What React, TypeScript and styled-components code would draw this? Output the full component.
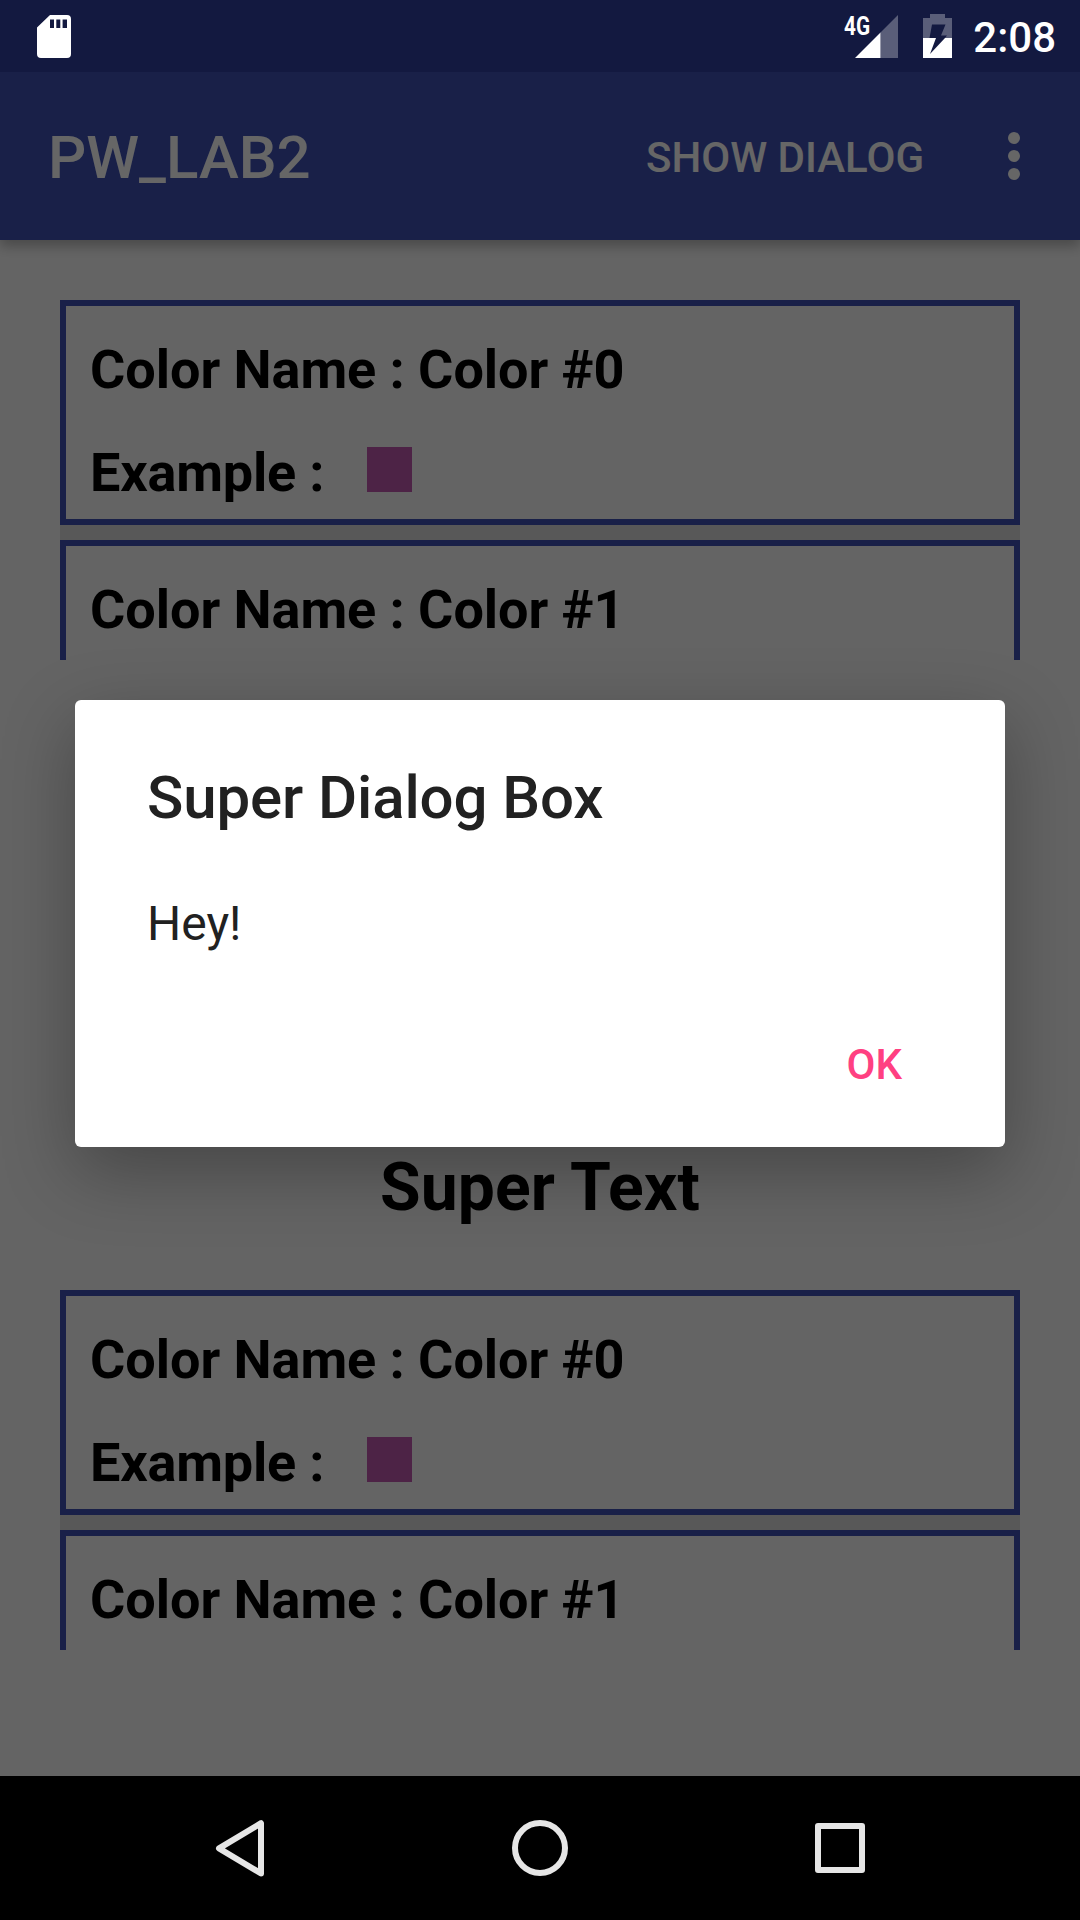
import React from "react";
import styled, { createGlobalStyle } from "styled-components";

const GlobalStyle = createGlobalStyle`
  *, *::before, *::after { box-sizing: border-box; }
  body { margin: 0; background: #000; }
  h1, h2, p { margin: 0; }
  button { margin: 0; padding: 0; border: 0; background: none; font: inherit; }
  svg { display: block; }
`;

const Screen = styled.div`
  position: relative;
  width: 1080px;
  height: 1920px;
  overflow: hidden;
  display: flex;
  flex-direction: column;
  background: #fafafa;
  font-family: Roboto, "Liberation Sans", sans-serif;
`;

const StatusBar = styled.header`
  position: relative;
  z-index: 3;
  flex: none;
  height: 72px;
  padding: 0 24px 0 37px;
  display: flex;
  align-items: center;
  justify-content: space-between;
  background: #131940;
  color: #fff;
`;

const StatusIcons = styled.div`
  display: flex;
  align-items: center;
`;

const Signal = styled.div`
  display: flex;
  align-items: flex-start;
  height: 43px;
  margin-right: 25px;
`;

const NetworkType = styled.span`
  width: 11px;
  font-size: 26px;
  line-height: 22px;
  font-weight: 700;
  white-space: nowrap;
  transform: scaleX(0.8);
  transform-origin: 0 0;
`;

const Clock = styled.span`
  margin-left: 21px;
  padding-top: 3px;
  font-size: 42px;
  line-height: 50px;
  font-weight: 500;
`;

const AppBar = styled.div`
  position: relative;
  flex: none;
  height: 168px;
  padding: 0 60px 0 48px;
  display: flex;
  align-items: center;
  background: #3f51b5;
  color: #fff;
  box-shadow: 0 6px 12px rgba(0, 0, 0, 0.28);
`;

const AppTitle = styled.h1`
  flex: 1;
  padding-top: 4px;
  font-size: 60px;
  line-height: 70px;
  font-weight: 500;
`;

const BarAction = styled.button`
  margin-right: 84px;
  padding-top: 3px;
  color: inherit;
  font-size: 42px;
  line-height: 50px;
  font-weight: 500;
`;

const Content = styled.main`
  flex: 1;
  padding: 60px 60px 126px;
  display: flex;
  flex-direction: column;
`;

const ColorList = styled.section`
  height: 360px;
  display: flex;
  flex-direction: column;
  gap: 15px;
  overflow: hidden;
  background: #dcdcdc;
`;

const Card = styled.article<{ $cut?: boolean }>`
  flex: none;
  height: ${(p) => (p.$cut ? 120 : 225)}px;
  padding: 32px 24px 0;
  display: flex;
  flex-direction: column;
  gap: 39px;
  border: 6px solid #3f51b5;
  border-bottom-width: ${(p) => (p.$cut ? 0 : 6)}px;
  background: #fafafa;
`;

const CardRow = styled.div`
  display: flex;
  height: 64px;
  color: #000;
  font-size: 54px;
  line-height: 64px;
  font-weight: 700;
  letter-spacing: -0.05px;
`;

const RowLabel = styled.span`
  width: 277px;
  letter-spacing: -0.2px;
`;

const Swatch = styled.span`
  width: 45px;
  height: 45px;
  margin-top: 6px;
  background: #c158b0;
`;

const Caption = styled.p`
  flex: 1;
  display: flex;
  align-items: flex-end;
  justify-content: center;
  padding-bottom: 63px;
  color: #000;
  font-size: 66px;
  line-height: 78px;
  font-weight: 700;
  letter-spacing: 0.15px;
`;

const Scrim = styled.div`
  position: absolute;
  inset: 0;
  z-index: 2;
  padding: 72px 75px 145px;
  display: flex;
  align-items: center;
  background: rgba(0, 0, 0, 0.6);
`;

const Dialog = styled.section`
  width: 930px;
  height: 447px;
  padding: 63px 72px 0;
  display: flex;
  flex-direction: column;
  border-radius: 6px;
  background: #fff;
  color: #212121;
  box-shadow: 0 24px 72px rgba(0, 0, 0, 0.3);
`;

const DialogTitle = styled.h2`
  font-size: 60px;
  line-height: 70px;
  font-weight: 500;
  letter-spacing: -0.12px;
`;

const DialogText = styled.p`
  margin-top: 63px;
  font-size: 48px;
  line-height: 56px;
`;

const DialogActions = styled.div`
  margin-top: 88px;
  padding-right: 31px;
  display: flex;
  justify-content: flex-end;
`;

const DialogButton = styled.button`
  color: #ff4081;
  font-size: 42px;
  line-height: 50px;
  font-weight: 500;
`;

const NavBar = styled.nav`
  position: relative;
  z-index: 3;
  flex: none;
  height: 144px;
  padding: 0 90px;
  display: grid;
  grid-template-columns: repeat(3, 300px);
  place-items: center;
  background: #000;
`;

const SdCardIcon = () => (
  <svg width="34" height="43" viewBox="0 0 34 43">
    <path
      fill="#fff"
      fillRule="evenodd"
      d="M13 0H30Q34 0 34 4V39Q34 43 30 43H4Q0 43 0 39V12.500ZM13 4.500V13H17V4.500ZM19.300 4.500V13H23.300V4.500ZM25.600 4.500V13H30V4.500Z"
    />
  </svg>
);

const SignalIcon = () => (
  <svg width="43" height="43" viewBox="0 0 43 43">
    <path fill="#fff" fillOpacity=".3" d="M43 0V43H25.500V17.500Z" />
    <path fill="#fff" d="M0 43L25.500 17.500V43Z" />
  </svg>
);

const BatteryIcon = () => (
  <svg width="29" height="44" viewBox="0 0 29 44">
    <path
      fill="#fff"
      fillOpacity=".3"
      fillRule="evenodd"
      d="M7 0H22V4H29V24H22L24 21.500H18L22.500 10.500H9L6.500 24H0V4H7Z"
    />
    <path fill="#fff" d="M0 24H13L7 40L22 24H29V44H0Z" />
  </svg>
);

const OverflowIcon = () => (
  <svg width="12" height="48" viewBox="0 0 12 48" fill="#fff">
    <circle cx="6" cy="6" r="6" />
    <circle cx="6" cy="24" r="6" />
    <circle cx="6" cy="42" r="6" />
  </svg>
);

const NavIcon = ({ kind }: { kind: "back" | "home" | "recent" }) => (
  <svg width="60" height="60" viewBox="0 0 60 60" fill="none" stroke="#e6e6e6" strokeWidth="6" strokeLinejoin="round">
    {kind === "back" && <path d="M9 30.300L51 5.200V55.400Z" />}
    {kind === "home" && <circle cx="30" cy="30" r="25" />}
    {kind === "recent" && <rect x="8" y="8" width="44" height="44" />}
  </svg>
);

const ColorCards = () => (
  <ColorList>
    <Card>
      <CardRow>Color Name : Color #0</CardRow>
      <CardRow>
        <RowLabel>Example :</RowLabel>
        <Swatch />
      </CardRow>
    </Card>
    <Card $cut>
      <CardRow>Color Name : Color #1</CardRow>
    </Card>
  </ColorList>
);

export default function App() {
  return (
    <>
      <GlobalStyle />
      <Screen>
        <StatusBar>
          <SdCardIcon />
          <StatusIcons>
            <Signal>
              <NetworkType>4G</NetworkType>
              <SignalIcon />
            </Signal>
            <BatteryIcon />
            <Clock>2:08</Clock>
          </StatusIcons>
        </StatusBar>
        <AppBar>
          <AppTitle>PW_LAB2</AppTitle>
          <BarAction>SHOW DIALOG</BarAction>
          <OverflowIcon />
        </AppBar>
        <Content>
          <ColorCards />
          <Caption>Super Text</Caption>
          <ColorCards />
        </Content>
        <NavBar>
          <NavIcon kind="back" />
          <NavIcon kind="home" />
          <NavIcon kind="recent" />
        </NavBar>
        <Scrim>
          <Dialog role="dialog">
            <DialogTitle>Super Dialog Box</DialogTitle>
            <DialogText>Hey!</DialogText>
            <DialogActions>
              <DialogButton>OK</DialogButton>
            </DialogActions>
          </Dialog>
        </Scrim>
      </Screen>
    </>
  );
}
